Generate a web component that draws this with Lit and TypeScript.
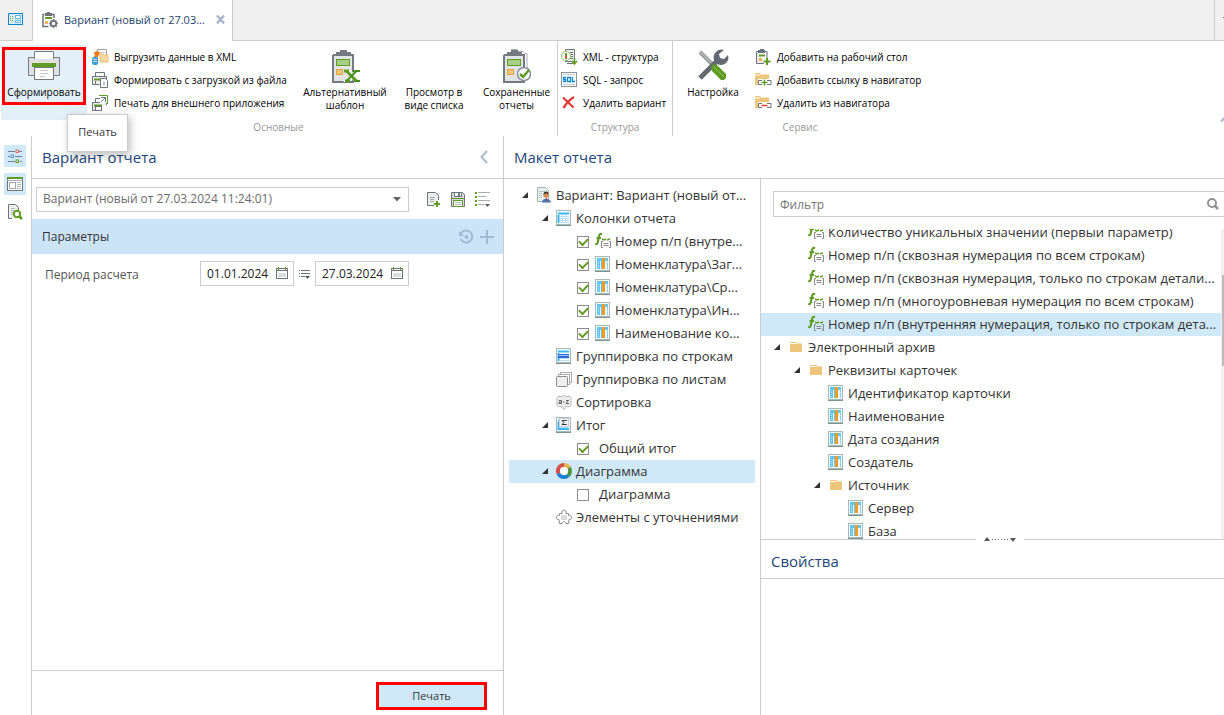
import { LitElement, html, css, svg, nothing } from "lit";
import { customElement, state } from "lit/decorators.js";
import { classMap } from "lit/directives/class-map.js";

type Node = {
  label: string;
  level: number;
  icon?: string;
  open?: boolean;
  check?: boolean;
  selected?: boolean;
};

const G = "#5f9c23";
const D = "#6d737b";

const clipboard = svg`
  <path d="M4 6h3M21 6h3V33H4V6" fill="#e3e4e6" stroke="#747a84" stroke-width="2"/>
  <rect x="6" y="8" width="16" height="23" fill="#e3e4e6"/>
  <path d="M7 3h4V1h7v2h4v4H7z" fill="#747a84"/>
  <rect x="7.5" y="10.5" width="13" height="6" fill="#a8cf85" stroke="${G}"/>
  <rect x="7.5" y="20.5" width="6" height="5" fill="#f4c67c" stroke="#e3a63c"/>`;

const frame = svg`
  <rect x=".5" y=".5" width="14" height="14" fill="#f3f8f8" stroke="#a5bab9"/>
  <path d="M0 15.5h15" stroke="#7c9291"/>`;

const columnBase = svg`${frame}
  <rect x="2" y="2" width="11" height="11" fill="#fff"/>
  <path d="M2 3.5h11M2.5 5v8" stroke="#38b6f2" stroke-width="2"/>
  <path d="M4 6.5h9M4 8.5h9M4 10.500h9M4 12.500h9" stroke="#b9def2"/>`;

const printer = svg`
  <path d="M3.500 5V.5h9V5" fill="#fff" stroke="${D}"/>
  <path d="M3 12.500H.5V4.500h14V7" fill="#eee" stroke="${D}"/>
  <path d="M2 7.500h8" stroke="${G}" stroke-width="2"/>`;

const folder = svg`<path d="M0 1h5l1 1.500h8V13H0z" fill="#edc57b"/><path d="M0 3h5" stroke="#fff"/>`;
const link = svg`<path d="M3 7h14v8H3z" fill="#fff"/><path d="M7 8.500H3.500v4H7M12 8.500h4v4h-4" fill="none" stroke="${D}"/>`;

/* name -> [width, height, drawing] */
const ICONS: Record<string, [number, number, unknown]> = {
  home: [15, 12, svg`
    <rect x=".5" y=".5" width="14" height="11" fill="#d9effb" stroke="#0c87cf"/>
    <path d="M7.500 2.500h5v3h-5zM7.500 7.500h5v2h-5z" fill="#fff" stroke="#5db4e4"/>
    <path d="M2 3.500h1M4 5.500h1M2 7.500h1" stroke="#e7964e"/>
    <path d="M4 3.500h1M2 5.500h1M4 7.500h1" stroke="${G}"/>`],
  variant: [16, 16, svg`
    <path d="M2.500 2.500h-1.500v12h5.500M10 2.500h2V6" fill="none" stroke="${D}" stroke-width="1.500"/>
    <path d="M3 1h2V0h3v1h2v3H3z" fill="${D}"/>
    <rect x="3" y="5" width="7" height="2" fill="${G}"/><rect x="3" y="9" width="3" height="3" fill="#edb45a"/>
    <circle cx="11.500" cy="11.500" r="2.700" fill="#fff" stroke="${D}" stroke-width="1.800"/>
    <path d="M11.500 7v1M11.500 15v1M7 11.500h1M15 11.500h1M8.500 8.500l.7.7M14 14l.7.7M14.500 8.500l-.7.7M8.500 14.500l.7-.7" stroke="${D}" stroke-width="1.500"/>`],
  close: [9, 9, svg`<path d="M1 .5l7 8M8 .5l-7 8" stroke="#a3b4c6" stroke-width="2.300"/>`],
  print: [32, 32, svg`
    <path d="M.5 7.500h31v18H.5z" fill="#e0e0e2" stroke="#747a84"/>
    <path d="M6.500 9V1.500h19V9" fill="#fff" stroke="#747a84"/>
    <rect x="4" y="13" width="24" height="4" fill="${G}"/>
    <rect x="6.500" y="17.500" width="19" height="12" fill="#fff" stroke="#747a84"/>
    <path d="M12 20.500h8M12 23.500h8M12 26.500h5" stroke="#c8c9cc"/>`],
  exportXml: [16, 16, svg`
    <path d="M5.500 9V.5h9V6" fill="#fff" stroke="#9aa0a8"/><path d="M8 3.500h5" stroke="#c8c9cc"/>
    <path d="M8 5h3l1 1h4v7H8z" fill="#f8d9a4" stroke="#f0bd72"/>
    <path d="M2 8l1-3H1l3-3 4 1-1 3-1.500 2z" fill="#ee7d17"/>
    <rect x="0" y="8" width="6" height="8" rx="2" fill="#3b9ddb"/><path d="M1 10.500h4M1 12.500h4" stroke="#c5e5f7"/>`],
  printFile: [16, 16, svg`${printer}<path d="M8.500 6.500h5l2 2v7h-7z" fill="#fff" stroke="${D}"/><path d="M11 9.500h2v4h-2z" fill="#c8c9cc"/><path d="M3.500 9v3.500h4" fill="none" stroke="${D}"/>`],
  printOut: [16, 16, svg`<g transform="translate(0 3)">${printer}<rect x="3.500" y="8.500" width="6" height="4" fill="#fff" stroke="${D}"/></g><path d="M8 8V1h7v7z" fill="#fff"/><path d="M7 .5h8.500V9" fill="none" stroke="${G}"/><path d="M9 7l4-4M9 2.500h4.500V7" fill="none" stroke="${D}"/>`],
  excel: [32, 34, svg`${clipboard}
    <path d="M15 21h6l2 3 3-3h6l-6 6 6 6h-6l-3-3-3 3h-6l6-6z" fill="#fff"/>
    <path d="M17 21.500l11 11M16 32h5M15 22h5" stroke="${G}" stroke-width="3"/>
    <path d="M28 21.500l-11 11M24 22h7M25 32h6" stroke="#4d8f1c" stroke-width="2"/>`],
  saved: [32, 34, svg`<path d="M10 1V.5h6v2h6l2 2h2V20" fill="none" stroke="#a9adb3"/><g transform="translate(-1 0)">${clipboard}</g>
    <circle cx="23" cy="25" r="6.500" fill="#fff" stroke="#8b9099" stroke-width="1.500"/>
    <path d="M19 25l3 3 6-7" fill="none" stroke="${G}" stroke-width="2.500"/>`],
  xml: [16, 16, svg`
    <path d="M4.500.5h9v12h-9z" fill="#eee" stroke="${D}"/><path d="M9 3.500h3M10 5.500h2M10 7.500h2M9 9.500h3M6 14.500h6" stroke="${D}"/>
    <circle cx="5" cy="7" r="4.500" fill="#fff" stroke="#8cbc62"/><path d="M5 4v6" stroke="${G}" stroke-width="2"/><path d="M5 7v2" stroke="#e44" stroke-width="2"/>
    <path d="M13.500 9v5M11 12l2.500 3 2.500-3" fill="none" stroke="${G}" stroke-width="1.500"/>`],
  sql: [16, 15, svg`
    <rect x=".5" y=".5" width="15" height="14" fill="#fff" stroke="#8b9099"/><path d="M2 2.500h12M2 12.500h12" stroke="#c8c9cc"/>
    <path d="M5 5.500H2.500v2h2v2H2M6.500 5.500h3v4h-3zM9 9l1 1.500M11.500 5v4.500H14" fill="none" stroke="#0c87cf" stroke-width="1.300"/>`],
  remove: [15, 13, svg`<path d="M2 1.500l10.500 10M13 1C9 3.500 5 7.500 2.500 12" fill="none" stroke="#e23b36" stroke-width="2.300"/>`],
  tools: [32, 32, svg`
    <path d="M3 3l13 13" stroke="#9b9da0" stroke-width="4"/><path d="M2 1.500l13 13" stroke="#c9cacc"/>
    <path d="M3 29L20 12" stroke="#656a72" stroke-width="5"/>
    <path d="M27 1a8 8 0 0 0-10 10 7 7 0 0 0 14-5l-4 4-4-1-1-4z" fill="#656a72"/>
    <path d="M14 18l3-3 3 1 9 9v4l-2 2h-3l-9-9z" fill="${G}"/><path d="M17 18l10 10" stroke="#89c251"/>`],
  clipAdd: [16, 16, svg`
    <path d="M3 2.500H1.500v12H9M10 2.500h2V9" fill="#e8e9ea" stroke="${D}"/><path d="M3 1h2V0h4v1h1v3H3z" fill="${D}"/>
    <path d="M4 6.500h6" stroke="${G}" stroke-width="2"/><rect x="4" y="9" width="3" height="3" fill="#edb45a"/>
    <path d="M12 9v7M8.500 12.500h7" stroke="${G}" stroke-width="2"/>`],
  linkAdd: [17, 15, svg`${folder}${link}<path d="M9.500 7.500v6M6.500 10.500h6" stroke="${G}" stroke-width="1.500"/>`],
  linkDel: [17, 15, svg`${folder}${link}<path d="M6.500 10.500h6" stroke="#e23b36" stroke-width="1.500"/>`],
  sliders: [16, 14, svg`
    <path d="M1 2.500h7M12 2.500h3M1 7.500h2M8 7.500h7M1 12.500h7M13 12.500h2" stroke="#6d8194"/>
    <rect x="9" y="1" width="2.500" height="2.500" fill="#fff" stroke="#f0645a"/><rect x="4" y="6" width="2.500" height="2.500" fill="#fff" stroke="#5a94d6"/><rect x="9" y="11" width="2.500" height="2.500" fill="#fff" stroke="${G}"/>`],
  layout: [16, 14, svg`
    <rect x=".5" y=".5" width="15" height="13" fill="#fff" stroke="${D}"/><path d="M0 1h16" stroke="${G}" stroke-width="2"/><path d="M0 3.500h16" stroke="#aab"/>
    <rect x="2.500" y="5.500" width="6" height="6" fill="#fff" stroke="#a5a9ae"/><path d="M10 5.500h4M10 7.500h4M10 9.500h4M10 11.500h4" stroke="#b5b8bc"/>`],
  preview: [16, 16, svg`
    <path d="M5 14.500H1.500V.5h7l3 3V6" fill="#eee" stroke="${D}"/><path d="M4 4.500h4M4 6.500h3M4 8.500h2M4 10.500h2" stroke="#b5b8bc"/>
    <circle cx="10" cy="10" r="3.200" fill="#fff" stroke="${G}" stroke-width="2"/><path d="M12 12l3 3" stroke="${G}" stroke-width="2.500"/>`],
  back: [8, 12, svg`<path d="M7 0L1.500 6 7 12" fill="none" stroke="#a9bccf" stroke-width="2"/>`],
  docAdd: [14, 15, svg`<path d="M7 13.500H.5V.5h8l3 3V8" fill="#eee" stroke="${D}"/><path d="M3 5.500h5M3 7.500h4M3 9.500h4" stroke="#a5a9ae"/><path d="M10 9v6M7 12h6" stroke="${G}" stroke-width="2"/>`],
  save: [14, 15, svg`<path d="M.5.5h11l2 2v12H.5z" fill="#d7d9dc" stroke="${D}"/><path d="M3.500.5h7v4h-7z" fill="#fff" stroke="${D}"/><path d="M8 1v3" stroke="${D}" stroke-width="2"/><path d="M1 6.500h12" stroke="${G}"/><path d="M2.500 8.500h9v6h-9z" fill="#fff" stroke="${G}"/><path d="M4 10.500h6M4 12.500h6" stroke="#b5b8bc"/>`],
  list: [15, 15, svg`<path d="M1 0v2M1 4v2M1 8v2M1 12v2" stroke="${G}" stroke-width="2"/><path d="M3 .5h12M3 4.500h8M3 8.500h12M3 12.500h6" stroke="#a9acb0"/><path d="M10 12h5l-2.500 3z" fill="#555"/>`],
  history: [15, 14, svg`<path d="M2 3.500A6 6 0 1 1 1.700 9" fill="none" stroke="#a3b9d2" stroke-width="2"/><path d="M0 1v5h5z" fill="#a3b9d2"/><circle cx="7.500" cy="7" r="2" fill="#a3b9d2"/>`],
  plus: [14, 14, svg`<path d="M7 0v14M0 7h14" stroke="#a3b9d2" stroke-width="2"/>`],
  calendar: [12, 12, svg`<rect x=".5" y="1.500" width="11" height="10" fill="#fff" stroke="${D}"/><path d="M0 3.500h12" stroke="${D}"/><path d="M2.500 0v3M9.500 0v3" stroke="${G}"/><rect x="2" y="6" width="8" height="4" fill="#dcdddf"/>`],
  lines: [11, 10, svg`<path d="M0 1.500h1M2 1.500h9M0 4.500h1M2 4.500h9M0 7.500h1M2 7.500h4" stroke="${D}"/><path d="M6 7h5L8.500 10z" fill="#555"/>`],
  caret: [8, 4, svg`<path d="M0 0h8L4 4.500z" fill="#666"/>`],
  person: [16, 16, svg`<path d="M1.500.5h8l3 3v11h-11z" fill="#e8f1f1" stroke="#9fb4b3"/><path d="M3 4.500h6M3 6.500h3M3 8.500h3M3 10.500h3" stroke="#b5c7c6"/><circle cx="10" cy="8" r="2.700" fill="#d88b54"/><path d="M7.500 7.500c0-4 5-4 5 0-1-1.500-4-1.500-5 0z" fill="#38302c"/><path d="M6 15.500c0-5 8-5 9 0z" fill="#3b7ab6"/><path d="M10.500 11v4" stroke="#d33"/>`],
  column: [15, 16, svg`${frame}<rect x="2" y="2" width="11" height="11" fill="#62c6f4"/>
    <path d="M5.500 5v8M10.500 5v8M11.500 5v8" stroke="#eef7fc"/><path d="M3.500 5v8M12.500 5v8" stroke="#b5e0f6" stroke-dasharray="1 1"/>
    <rect x="7" y="2" width="3" height="11" fill="#f79a22"/>`],
  table: [16, 16, svg`${columnBase}<path d="M6.500 5v8M9.500 5v8" stroke="#b9def2"/>`],
  rows: [16, 16, svg`${columnBase}<rect x="2" y="6" width="11" height="4" fill="#2f66d8"/><path d="M2 7.500h11" stroke="#9cc2f7"/>`],
  sheets: [16, 15, svg`<rect x="4.500" y=".5" width="11" height="10" fill="#fff" stroke="#a9a9a9"/><rect x="2.500" y="2.500" width="11" height="10" fill="#fff" stroke="#a9a9a9"/><rect x=".5" y="4.500" width="11" height="10" rx="1" fill="#eee" stroke="#8f8f8f"/>`],
  sort: [16, 15, svg`<path d="M2 1.500h4l2-1.500 2 1.500h4l1 1v8l-1 1h-4l-2 3-2-3H2l-1-1v-8z" fill="#ececec" stroke="#bcbcbc"/><path d="M3 5.500h2.500v3H3v-1.500h2M7 7h1.500M10 5.500h2.500l-2.500 3h3" fill="none" stroke="#666"/>`],
  total: [16, 16, svg`${columnBase}<rect x="3.500" y="1.500" width="9" height="8" fill="#f4f8fa" stroke="#ccd"/><path d="M10.500 4v-.5H6l2 2-2 2h4.500V7" fill="none" stroke="#333"/><path d="M2 12h11" stroke="#38b6f2" stroke-width="2"/>`],
  ring: [16, 16, svg`<g fill="none" stroke-width="4"><path d="M8 2a6 6 0 0 0-5.500 8.500" stroke="#d8504c"/><path d="M8 2a6 6 0 0 1 5 2.700" stroke="#e8b54b"/><path d="M13 4.700a6 6 0 0 1-1 7.800" stroke="#4f9440"/><path d="M12 12.500a6 6 0 0 1-9.500-2" stroke="#1c7fd0"/></g><circle cx="8" cy="8" r="4" fill="#fff"/>`],
  puzzle: [16, 16, svg`<path d="M3.500 4.500H6C4.800 0 11.200 0 10 4.500h2.500V6.500C16.500 5.500 16.500 11 13 10.500l-.5 4H10c-.5-2.500-3.500-2.500-4 0H3.500l-.5-4C-.5 11-.5 5.500 3.500 6.500z" fill="#fff" stroke="#8a8a8a"/><path d="M5 6h6v5H5z" fill="#dcdcdc"/>`],
  folder: [14, 12, svg`<path d="M2 1h7l1 1.500h4V11H2z" fill="#edc57b"/><path d="M2 2.500h7" stroke="#fff"/>`],
  fx: [16, 16, svg`<path d="M7 1.200c-2-1-2.700.5-3 2.300L2.600 10c-.3 1-1 1.300-2.300.8M1.500 5h4.500" fill="none" stroke="${G}" stroke-width="2.200"/><path d="M7 6l2 1M9 7l2-1M12 7l3-1" stroke="${G}" stroke-width="1.500"/><path d="M8 8.500H6.500v6H8M14 8.500h1.500v6H14M8.500 10.500h5M8.500 12.500h5" fill="none" stroke="#888"/>`],
  search: [12, 12, svg`<circle cx="5" cy="5" r="4" fill="none" stroke="#929292" stroke-width="2"/><path d="M8 8l3 3" stroke="#929292" stroke-width="2.500"/>`],
  grip: [32, 5, svg`<path d="M0 4h6L3 0zM26 1h6l-3 4z" fill="#555"/><path d="M8 2.500h17" stroke="#777" stroke-dasharray="1 2"/>`],
  up: [6, 4, svg`<path d="M1 3.500L4 .5l3 3" fill="none" stroke="#a9b8cf" stroke-width="2"/>`],
};

const icon = (name: string) => {
  const [w, h, body] = ICONS[name];
  return html`<svg class="icon" width=${w} height=${h} viewBox="0 0 ${w} ${h}" aria-hidden="true">${body}</svg>`;
};

const shared = css`
  * { box-sizing: border-box; }
  .icon { display: block; flex: none; overflow: visible; }
  button { font: inherit; color: inherit; border: 0; background: none; padding: 0; cursor: pointer; }
`;

@customElement("report-tree")
class ReportTree extends LitElement {
  static properties = { nodes: { attribute: false } };
  declare nodes: Node[];

  static styles = [shared, css`
    :host { display: block; font: 13px/17px "Open Sans", "Noto Sans", sans-serif; }
    ul { list-style: none; margin: 0; padding: 0; }
    .row { display: flex; align-items: center; height: 23px; padding-bottom: 1px; white-space: nowrap; }
    .row.selected { background: #d0e9f8; }
    .toggle { width: 6px; height: 6px; margin-right: 8px; flex: none; display: block; }
    .toggle.leaf { visibility: hidden; }
    .glyph { width: 16px; margin-right: 4px; flex: none; display: flex; }
    label { display: flex; align-items: center; }
    input {
      appearance: none; width: 12px; height: 12px; margin: 1px 6px 0 1px; flex: none;
      border: 1px solid #8c8c8c; background: #fff; display: grid; place-items: center;
    }
    input:checked::after {
      content: ""; width: 7px; height: 4px; margin-top: -2px;
      border: solid #5f9c23; border-width: 0 0 2px 2px; transform: rotate(-45deg);
    }
    .bare { margin-left: 4px; }
  `];

  render() {
    return html`<ul role="tree">${this.nodes.map((n) => html`
      <li role="treeitem" class=${classMap({ row: true, selected: !!n.selected })} style="padding-left:${13 + n.level * 20}px">
        ${n.open
          ? html`<button class="toggle" aria-label="Свернуть">
              <svg class="icon" width="6" height="6"><path d="M6 0v6H0z" fill="#333"/></svg></button>`
          : html`<span class="toggle leaf"></span>`}
        ${n.check === undefined
          ? html`<span class="glyph">${icon(n.icon!)}</span><span>${n.label}</span>`
          : html`<label><input type="checkbox" .checked=${n.check}>
              ${n.icon ? html`<span class="glyph">${icon(n.icon)}</span>` : nothing}
              <span class=${classMap({ bare: !n.icon })}>${n.label}</span></label>`}
      </li>`)}</ul>`;
  }
}

@customElement("app-root")
class AppRoot extends LitElement {
  @state() private layoutNodes: Node[] = [
    { label: "Вариант: Вариант (новый от...", level: 0, icon: "person", open: true },
    { label: "Колонки отчета", level: 1, icon: "table", open: true },
    { label: "Номер п/п (внутре...", level: 2, icon: "fx", check: true },
    { label: "Номенклатура\\Заг...", level: 2, icon: "column", check: true },
    { label: "Номенклатура\\Ср...", level: 2, icon: "column", check: true },
    { label: "Номенклатура\\Ин...", level: 2, icon: "column", check: true },
    { label: "Наименование ко...", level: 2, icon: "column", check: true },
    { label: "Группировка по строкам", level: 1, icon: "rows" },
    { label: "Группировка по листам", level: 1, icon: "sheets" },
    { label: "Сортировка", level: 1, icon: "sort" },
    { label: "Итог", level: 1, icon: "total", open: true },
    { label: "Общий итог", level: 2, check: true },
    { label: "Диаграмма", level: 1, icon: "ring", open: true, selected: true },
    { label: "Диаграмма", level: 2, check: false },
    { label: "Элементы с уточнениями", level: 1, icon: "puzzle" },
  ];

  @state() private fieldNodes: Node[] = [
    { label: "Количество уникальных значений (первый параметр)", level: 1, icon: "fx" },
    { label: "Номер п/п (сквозная нумерация по всем строкам)", level: 1, icon: "fx" },
    { label: "Номер п/п (сквозная нумерация, только по строкам детали...", level: 1, icon: "fx" },
    { label: "Номер п/п (многоуровневая нумерация по всем строкам)", level: 1, icon: "fx" },
    { label: "Номер п/п (внутренняя нумерация, только по строкам дета...", level: 1, icon: "fx", selected: true },
    { label: "Электронный архив", level: 0, icon: "folder", open: true },
    { label: "Реквизиты карточек", level: 1, icon: "folder", open: true },
    { label: "Идентификатор карточки", level: 2, icon: "column" },
    { label: "Наименование", level: 2, icon: "column" },
    { label: "Дата создания", level: 2, icon: "column" },
    { label: "Создатель", level: 2, icon: "column" },
    { label: "Источник", level: 2, icon: "folder", open: true },
    { label: "Сервер", level: 3, icon: "column" },
    { label: "База", level: 3, icon: "column" },
  ];

  static styles = [shared, css`
    :host {
      display: flex; flex-direction: column; height: 100vh; overflow: hidden;
      font: 12px/18px "Open Sans", "Noto Sans", sans-serif; color: #333; background: #fff;
    }
    .tabs { display: flex; height: 41px; flex: none; background: #f0f0f0; }
    .tab { display: flex; align-items: center; border-bottom: 1px solid #ccc; }
    .tab.home { width: 32px; padding: 0 0 2px 8px; }
    .tab.active { width: 201px; background: #fff; border: solid #ccc; border-width: 0 1px; padding: 0 7px 2px 9px; font-size: 11px; color: #1c3f6b; }
    .tab.active .name { flex: 1; margin-left: 6px; white-space: nowrap; }
    .tab.rest { flex: 1; justify-content: flex-end; }
    .tab .more { width: 10px; height: 40px; border-left: 1px solid #ccc; display: flex; justify-content: flex-end; padding-top: 17px; }
    .tab .more::after { content: ""; width: 1px; height: 1px; background: #666; }

    .ribbon { display: flex; height: 95px; flex: none; font-size: 10px; line-height: 13px; color: #000; position: relative; }
    .group { display: flex; flex-direction: column; border-right: 1px solid #ccc; }
    .group.last { border: 0; }
    .tools { display: flex; height: 80px; padding-top: 4px; }
    .caption { text-align: center; color: #999; }
    .big { display: flex; flex-direction: column; align-items: center; padding-top: 4px; white-space: nowrap; height: 75px; }
    .big .art { height: 37px; display: block; }
    .main { position: relative; width: 86px; margin-left: 1px; background: #e3f0fa; padding-top: 5px; }
    .main .art { height: 36px; }
    .main .frame { position: absolute; inset: 2px 1px 15px 1px; border: 3px solid #f00; }
    .small { display: flex; flex-direction: column; }
    .small button { display: flex; align-items: center; height: 23px; white-space: nowrap; }
    .small .art { width: 22px; flex: none; }
    .small .name { padding-top: 2px; }
    .s1 { margin-left: 5px; width: 206px; }
    .b1 { width: 94px; } .b2 { width: 84px; } .b3 { width: 81px; }
    .s2 { padding-left: 3px; width: 114px; }
    .b4 { width: 80px; }
    .s3 { width: 174px; padding-left: 2px; }
    .fold { position: absolute; right: 0; bottom: 14px; width: 4px; }

    .body { flex: 1; display: flex; min-height: 0; }
    .rail { width: 32px; border-right: 1px solid #ccc; display: flex; flex-direction: column; align-items: center; gap: 6px; padding: 9px 2px 0 1px; flex: none; }
    .rail button { width: 22px; height: 22px; display: grid; place-items: center; }
    .rail .on { background: #d0e9f8; }
    .variant { width: 472px; flex: none; border-right: 1px solid #ccc; display: flex; flex-direction: column; }
    .head { display: flex; align-items: center; justify-content: space-between; height: 43px; flex: none; border-bottom: 1px solid #ccc; padding: 0 15px 0 10px; }
    h2 { margin: 0; font-size: 15px; line-height: 20px; font-weight: 400; color: #1c4679; }
    .pick { display: flex; align-items: center; height: 40px; padding-left: 4px; }
    .select { display: flex; align-items: center; width: 373px; margin-right: 18px; flex: none; }
    select { appearance: none; width: 100%; height: 25px; border: 1px solid #ccc; background: #fff; font: inherit; color: #6b6b6b; padding: 0 24px 0 6px; }
    .select .caret { margin-left: -16px; width: 16px; flex: none; pointer-events: none; }
    .pick .acts { display: flex; gap: 10px; align-items: center; }
    .bar { display: flex; align-items: center; height: 35px; background: #cce4f7; padding: 0 9px 0 10px; }
    .bar span { flex: 1; }
    .bar button + button { margin-left: 6px; }
    .period { display: flex; align-items: center; padding: 7px 0 0 13px; }
    .period label { width: 155px; color: #555; padding-top: 2px; }
    .date { display: flex; align-items: center; width: 94px; height: 25px; border: 1px solid #ccc; padding: 0 5px 2px 0; }
    .date input { flex: 1; width: 0; border: 0; outline: 0; font: inherit; color: #222; padding: 2px 0 0 6px; background: none; }
    .period .between { width: 21px; display: grid; place-items: center; }
    .foot { margin-top: auto; height: 45px; border-top: 1px solid #ccc; display: flex; justify-content: flex-end; padding: 11px 16px 0 0; }
    .go { width: 111px; height: 28px; border: 3px solid #f00; background: #d0e9f8; font-size: 11px; }
    .tip { position: absolute; left: 67px; top: 114px; width: 61px; height: 38px; z-index: 2; display: grid; place-items: center; padding-bottom: 2px; background: #fff; border: 1px solid #ccc; box-shadow: 2px 3px 8px #0004; font-size: 11px; }

    .right { flex: 1; min-width: 0; display: flex; flex-direction: column; }
    .cols { flex: 1; display: flex; min-height: 0; }
    .layout { width: 257px; flex: none; border-right: 1px solid #ccc; padding: 5px; }
    .fields { flex: 1; min-width: 0; display: flex; flex-direction: column; }
    .filter { display: flex; align-items: center; height: 26px; margin: 12px 0 0 12px; border: 1px solid #ccc; border-right: 0; padding-right: 5px; flex: none; }
    .filter input { flex: 1; border: 0; outline: 0; font: inherit; color: #333; padding: 2px 6px 0; }
    .filter input::placeholder { color: #777; opacity: 1; }
    .scroll { display: flex; height: 310px; margin-top: 12px; overflow: hidden; flex: none; }
    .scroll report-tree { flex: 1; min-width: 0; margin-top: -8px; }
    .track { width: 3px; background: #f0f0f0; padding-top: 46px; }
    .thumb { height: 91px; background: #bbb; margin-left: 1px; }
    .split { display: flex; align-items: center; gap: 8px; height: 1px; flex: none; margin-right: -15px; }
    .split i { flex: 1; height: 1px; background: #ccc; }
    .props { height: 39px; padding-top: 4px; }
  `];

  private small(ic: string, text: string) {
    return html`<button><span class="art">${icon(ic)}</span><span class="name">${text}</span></button>`;
  }

  render() {
    return html`
      <nav class="tabs">
        <button class="tab home" aria-label="Рабочий стол">${icon("home")}</button>
        <div class="tab active">${icon("variant")}<span class="name">Вариант (новый от 27.03...</span>
          <button aria-label="Закрыть">${icon("close")}</button></div>
        <div class="tab rest"><span class="more"></span></div>
      </nav>

      <div class="ribbon">
        <section class="group">
          <div class="tools">
            <button class="big main"><span class="art">${icon("print")}</span>Сформировать<span class="frame"></span></button>
            <div class="small s1">
              ${this.small("exportXml", "Выгрузить данные в XML")}
              ${this.small("printFile", "Формировать с загрузкой из файла")}
              ${this.small("printOut", "Печать для внешнего приложения")}
            </div>
            <button class="big b1"><span class="art">${icon("excel")}</span>Альтернативный<br>шаблон</button>
            <button class="big b2"><span class="art"></span>Просмотр в<br>виде списка</button>
            <button class="big b3"><span class="art">${icon("saved")}</span>Сохраненные<br>отчеты</button>
          </div>
          <div class="caption">Основные</div>
        </section>
        <section class="group">
          <div class="tools"><div class="small s2">
            ${this.small("xml", "XML - структура")}
            ${this.small("sql", "SQL - запрос")}
            ${this.small("remove", "Удалить вариант")}
          </div></div>
          <div class="caption">Структура</div>
        </section>
        <section class="group last">
          <div class="tools">
            <button class="big b4"><span class="art">${icon("tools")}</span>Настройка</button>
            <div class="small s3">
              ${this.small("clipAdd", "Добавить на рабочий стол")}
              ${this.small("linkAdd", "Добавить ссылку в навигатор")}
              ${this.small("linkDel", "Удалить из навигатора")}
            </div>
          </div>
          <div class="caption">Сервис</div>
        </section>
        <button class="fold" aria-label="Свернуть ленту">${icon("up")}</button>
      </div>

      <main class="body">
        <nav class="rail">
          <button class="on" aria-label="Параметры">${icon("sliders")}</button>
          <button class="on" aria-label="Макет">${icon("layout")}</button>
          <button aria-label="Просмотр">${icon("preview")}</button>
        </nav>
        <section class="variant">
          <header class="head"><h2>Вариант отчета</h2><button aria-label="Свернуть">${icon("back")}</button></header>
          <div class="pick">
            <div class="select">
              <select aria-label="Вариант"><option>Вариант (новый от 27.03.2024 11:24:01)</option></select>
              <span class="caret">${icon("caret")}</span>
            </div>
            <div class="acts">
              <button aria-label="Создать">${icon("docAdd")}</button>
              <button aria-label="Сохранить">${icon("save")}</button>
              <button aria-label="Список">${icon("list")}</button>
            </div>
          </div>
          <div class="bar"><span>Параметры</span>
            <button aria-label="Сбросить">${icon("history")}</button>
            <button aria-label="Добавить">${icon("plus")}</button></div>
          <div class="period">
            <label for="from">Период расчета</label>
            <div class="date"><input id="from" value="01.01.2024">${icon("calendar")}</div>
            <button class="between" aria-label="Выбрать период">${icon("lines")}</button>
            <div class="date"><input aria-label="Конец периода" value="27.03.2024">${icon("calendar")}</div>
          </div>
          <footer class="foot"><button class="go">Печать</button></footer>
        </section>
        <section class="right">
          <header class="head"><h2>Макет отчета</h2></header>
          <div class="cols">
            <div class="layout"><report-tree .nodes=${this.layoutNodes}></report-tree></div>
            <div class="fields">
              <div class="filter"><input placeholder="Фильтр" aria-label="Фильтр">${icon("search")}</div>
              <div class="scroll"><report-tree .nodes=${this.fieldNodes}></report-tree>
                <div class="track"><div class="thumb"></div></div></div>
              <div class="split"><i></i>${icon("grip")}<i></i></div>
              <header class="head props"><h2>Свойства</h2></header>
            </div>
          </div>
        </section>
      </main>
      <div class="tip" role="tooltip">Печать</div>`;
  }
}
